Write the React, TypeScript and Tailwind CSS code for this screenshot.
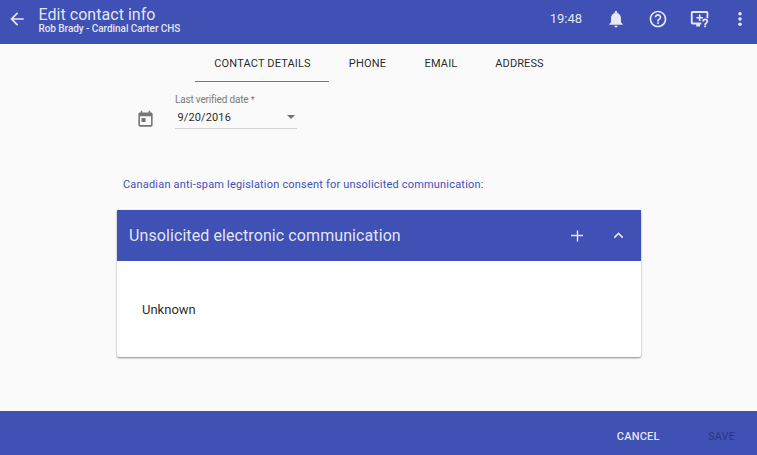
import React from "react";

function Icon({ size, children, className = "" }: { size: number; children: React.ReactNode; className?: string }) {
  return (
    <svg width={size} height={size} viewBox="0 0 24 24" fill="currentColor" className={"block shrink-0 " + className}>
      {children}
    </svg>
  );
}

function Header() {
  return (
    <header className="flex h-11 shrink-0 bg-[#3f51b5] text-white/87">
      <button className="ml-[7px] mt-[9px] h-5 w-5">
        <Icon size={20}>
          <path d="M20 11H7.83l5.59-5.59L12 4l-8 8 8 8 1.41-1.41L7.83 13H20v-2z" />
        </Icon>
      </button>
      <div className="ml-[11.5px] flex-1 whitespace-nowrap">
        <h1 className="mt-[6px] text-[16px] leading-[17px] tracking-[0.04px]">Edit contact info</h1>
        <p className="text-[10px] font-medium leading-3 tracking-[-0.06px]">Rob Brady - Cardinal Carter CHS</p>
      </div>
      <span className="mt-[9px] text-[13px] leading-5">19:48</span>
      <button className="ml-[24px] mt-[9px] h-5 w-5">
        <Icon size={20}>
          <path d="M12 22c1.1 0 2-.9 2-2h-4c0 1.1.89 2 2 2zm6-6v-5c0-3.07-1.64-5.64-4.5-6.32V4c0-.83-.67-1.5-1.5-1.5s-1.5.67-1.5 1.5v.68C7.63 5.36 6 7.92 6 11v5l-2 2v1h16v-1l-2-2z" />
        </Icon>
      </button>
      <button className="ml-[21.5px] mt-[9px] h-5 w-5">
        <Icon size={20}>
          <path d="M11 18h2v-2h-2v2zm1-16C6.48 2 2 6.48 2 12s4.48 10 10 10 10-4.48 10-10S17.52 2 12 2zm0 18c-4.41 0-8-3.59-8-8s3.59-8 8-8 8 3.59 8 8-3.59 8-8 8zm0-14c-2.21 0-4 1.79-4 4h2c0-1.1.9-2 2-2s2 .9 2 2c0 2-3 1.75-3 5h2c0-2.25 3-2.5 3-5 0-2.21-1.79-4-4-4z" />
        </Icon>
      </button>
      <button className="ml-[22.5px] mt-[9px] h-5 w-5">
        <Icon size={20}>
          <path d="M3 2.5h17a2 2 0 0 1 2 2V11h-2.2V4.7H3.2v11.6h10.3v2.2H12V21H7.5v-2.5H3a2 2 0 0 1-2-2v-12a2 2 0 0 1 2-2z" />
          <path d="M10.6 6.5h2v3h3v2h-3v3h-2v-3h-3v-2h3z" />
          <path d="M14.6 15a3.6 3.6 0 1 1 7.2 0c0 2.2-2.5 2.3-2.5 4.1h-2.2c0-2.7 2.5-2.8 2.5-4.1a1.4 1.4 0 0 0-2.8 0zM17.1 19.9h2.2v2.1h-2.2z" />
        </Icon>
      </button>
      <button className="ml-[20px] mr-[7px] mt-[9px] h-5 w-5">
        <Icon size={20}>
          <circle cx="12" cy="5.6" r="2.1" /><circle cx="12" cy="12" r="2.1" /><circle cx="12" cy="18.4" r="2.1" />
        </Icon>
      </button>
    </header>
  );
}

function Tabs() {
  return (
    <nav className="ml-[195px] flex h-[38px] shrink-0 whitespace-nowrap text-[11px] leading-[38px] text-black/87">
      <button className="h-[38px] w-[134px] border-b border-[#e83e78] pl-px pt-px tracking-[0.15px]">CONTACT DETAILS</button>
      <button className="h-[38px] w-[76px] border-b border-transparent pl-px pt-px tracking-[0.17px]">PHONE</button>
      <button className="h-[38px] w-[71px] border-b border-transparent pl-px pt-px tracking-[0.17px]">EMAIL</button>
      <button className="h-[38px] w-[87px] border-b border-transparent pt-px tracking-[0.1px]">ADDRESS</button>
    </nav>
  );
}

function DateField() {
  return (
    <div className="flex h-[47px] shrink-0 pl-[136px]">
      <Icon size={19} className="mt-[27.5px] text-[#757575]">
        <path d="M19 3h-1V1h-2v2H8V1H6v2H5c-1.11 0-1.99.9-1.99 2L3 19c0 1.1.89 2 2 2h14c1.1 0 2-.9 2-2V5c0-1.1-.9-2-2-2zm0 16H5V8h14v11zM7 10h5v5H7z" />
      </Icon>
      <label className="ml-5 mt-3 block w-[122px]">
        <span className="block whitespace-nowrap text-[10px] leading-3 tracking-[-0.18px] text-[#7b7b7b]">
          Last verified date <span className="text-[9px]">*</span>
        </span>
        <span className="flex h-[23px] items-center justify-between border-b border-black/15 pl-[2.5px] text-[11px] text-black/87">
          <span className="pt-[2px] tracking-[0.12px]">9/20/2016</span>
          <svg width="8" height="4" viewBox="0 0 8 4" className="mr-[2px]"><path d="M0 0h8L4 4z" fill="#737373" /></svg>
        </span>
      </label>
    </div>
  );
}

function ConsentCard() {
  return (
    <section className="ml-[117px] h-[147px] w-[524px] shrink-0 rounded-b-[2px] bg-white shadow-[0_1px_2px_rgba(0,0,0,0.45)]">
      <div className="flex h-[51px] items-center bg-[#3f51b5] pl-3 text-white/87">
        <h2 className="flex-1 whitespace-nowrap pt-px text-[16px] tracking-[0.09px]">Unsolicited electronic communication</h2>
        <button className="mr-[26px]">
          <svg width="12" height="12" viewBox="0 0 12 12" className="block"><path d="M0 5.5h12M6.5 0.5v11" stroke="currentColor" strokeWidth="1.4" /></svg>
        </button>
        <button className="mr-[13px]">
          <Icon size={19}><path d="M12 8l-6 6 1.41 1.41L12 10.83l4.59 4.58L18 14z" /></Icon>
        </button>
      </div>
      <p className="pl-[25px] pt-[39px] text-[13px] leading-5 text-black/87">Unknown</p>
    </section>
  );
}

export default function App() {
  return (
    <div className="flex h-[455px] w-[757px] flex-col overflow-hidden bg-[#fafafa] font-['Roboto','Liberation_Sans',sans-serif]">
      <Header />
      <main className="flex flex-1 flex-col">
        <Tabs />
        <DateField />
        <p className="mb-[17px] ml-[123px] mt-[48px] whitespace-nowrap text-[11px] leading-4 tracking-[0.19px] text-[#3f51b5]">
          Canadian anti-spam legislation consent for unsolicited communication:
        </p>
        <ConsentCard />
      </main>
      <footer className="flex h-11 shrink-0 items-center justify-end bg-[#3f51b5] pr-[22px] pt-[8px] text-[11px] font-medium">
        <button className="mr-[48.5px] tracking-[0.2px] text-white/87">CANCEL</button>
        <button className="font-normal tracking-[0.1px] text-black/35">SAVE</button>
      </footer>
    </div>
  );
}
